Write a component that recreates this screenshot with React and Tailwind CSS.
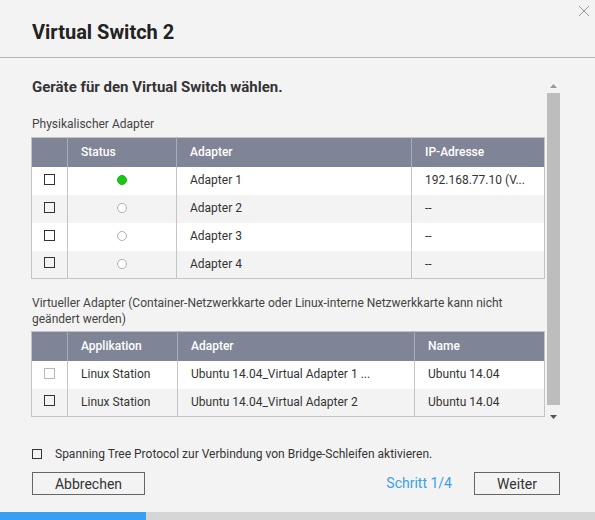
import React from 'react';

const physical = [
  { status: 'up', adapter: 'Adapter 1', ip: '192.168.77.10 (V...' },
  { status: 'down', adapter: 'Adapter 2', ip: '--' },
  { status: 'down', adapter: 'Adapter 3', ip: '--' },
  { status: 'down', adapter: 'Adapter 4', ip: '--' },
];

const virtual = [
  { app: 'Linux Station', adapter: 'Ubuntu 14.04_Virtual Adapter 1 ...', name: 'Ubuntu 14.04', disabled: true },
  { app: 'Linux Station', adapter: 'Ubuntu 14.04_Virtual Adapter 2', name: 'Ubuntu 14.04', disabled: false },
];

function Checkbox({ disabled }) {
  return (
    <span
      className={
        'inline-block w-[11px] h-[11px] border ' +
        (disabled ? 'border-[#b8b8b8]' : 'border-[#333]')
      }
    />
  );
}

function StatusDot({ status }) {
  if (status === 'up') {
    return <span className="inline-block w-[10px] h-[10px] rounded-full bg-[#11cc11] border border-[#22aa22]" />;
  }
  return <span className="inline-block w-[10px] h-[10px] rounded-full bg-white border border-[#b0b0b0]" />;
}

function HeadCell({ children, w }) {
  return (
    <th className={'h-[29px] px-[13px] text-left font-medium text-white border-l border-[#a8adb9] first:border-l-0 ' + w}>
      {children}
    </th>
  );
}

export default function App() {
  return (
    <div className="w-[595px] h-[520px] bg-[#f3f3f3] flex flex-col relative text-[#333] font-['Roboto','Liberation_Sans',sans-serif]">
      {/* close */}
      <button className="absolute top-[4px] right-[4px] w-[13px] h-[13px] text-[#9a9a9a]">
        <svg viewBox="0 0 12 12" width="12" height="12" fill="none" stroke="currentColor" strokeWidth="1">
          <path d="M1 1 L11 11 M11 1 L1 11" />
        </svg>
      </button>

      <div className="h-[58px] shrink-0 border-b border-[#b8b8b8] pl-[32px] pt-[18px]">
        <h1 className="text-[20px] leading-[28px] font-bold text-[#222]">Virtual Switch 2</h1>
      </div>

      <div className="h-[370px] shrink-0 flex">
        <div className="w-[544px] pl-[31px] pt-[19px]">
          <h2 className="pl-[1px] text-[15px] leading-[21px] font-bold text-[#333]">Geräte für den Virtual Switch wählen.</h2>
          <p className="mt-[18px] pl-[1px] text-[12px] leading-[16px] text-[#444]">Physikalischer Adapter</p>

          <table className="mt-[5px] w-[513px] border-collapse border border-[#c4c4c4] text-[12px] table-fixed">
            <thead className="bg-[#7f8596]">
              <tr>
                <HeadCell w="w-[36px]"></HeadCell>
                <HeadCell w="w-[109px]">Status</HeadCell>
                <HeadCell w="w-[235px]">Adapter</HeadCell>
                <HeadCell w="w-[133px]">IP-Adresse</HeadCell>
              </tr>
            </thead>
            <tbody>
              {physical.map((r, i) => (
                <tr key={r.adapter} className={i % 2 === 0 ? 'bg-white' : 'bg-[#f3f3f3]'}>
                  <td className="h-[28px] text-center">
                    <div className="flex justify-center -mt-[3px]"><Checkbox /></div>
                  </td>
                  <td className="text-center border-l border-[#c4c4c4]">
                    <div className="flex justify-center -mt-[1px]"><StatusDot status={r.status} /></div>
                  </td>
                  <td className="px-[13px] pb-[1px] border-l border-[#c4c4c4] text-[#333]">{r.adapter}</td>
                  <td className="px-[13px] pb-[1px] border-l border-[#c4c4c4] text-[#333] whitespace-nowrap">{r.ip}</td>
                </tr>
              ))}
            </tbody>
          </table>

          <p className="mt-[16px] pl-[1px] pr-[10px] text-[12px] leading-[16px] text-[#444]">
            Virtueller Adapter (Container-Netzwerkkarte oder Linux-interne Netzwerkkarte kann nicht geändert werden)
          </p>

          <table className="mt-[4px] w-[513px] border-collapse border border-[#c4c4c4] text-[12px] table-fixed">
            <thead className="bg-[#7f8596]">
              <tr>
                <HeadCell w="w-[36px]"></HeadCell>
                <HeadCell w="w-[110px]">Applikation</HeadCell>
                <HeadCell w="w-[237px]">Adapter</HeadCell>
                <HeadCell w="w-[130px]">Name</HeadCell>
              </tr>
            </thead>
            <tbody>
              {virtual.map((r, i) => (
                <tr key={r.adapter} className={i % 2 === 0 ? 'bg-white' : 'bg-[#f3f3f3]'}>
                  <td className="h-[28px] text-center">
                    <div className="flex justify-center -mt-[3px]"><Checkbox disabled={r.disabled} /></div>
                  </td>
                  <td className="px-[13px] pb-[1px] border-l border-[#c4c4c4]">{r.app}</td>
                  <td className="px-[13px] pb-[1px] border-l border-[#c4c4c4] whitespace-nowrap">{r.adapter}</td>
                  <td className="px-[13px] pb-[1px] border-l border-[#c4c4c4]">{r.name}</td>
                </tr>
              ))}
            </tbody>
          </table>
        </div>

        {/* scrollbar */}
        <div className="w-[18px] flex flex-col items-center pt-[26px]">
          <svg width="7" height="4" viewBox="0 0 7 4"><path d="M0 4 L3.5 0 L7 4 Z" fill="#999" /></svg>
          <div className="mt-[5px] w-[13px] h-[312px] bg-[#bdbdbd]" />
          <svg className="mt-[10px]" width="7" height="4" viewBox="0 0 7 4"><path d="M0 0 L3.5 4 L7 0 Z" fill="#555" /></svg>
        </div>
      </div>

      <div className="flex-1 flex flex-col px-[32px]">
        <label className="mt-[20px] flex items-center h-[12px]">
          <span className="inline-block w-[10px] h-[10px] border border-[#333]" />
          <span className="ml-[13px] text-[12px] text-[#333]">Spanning Tree Protocol zur Verbindung von Bridge-Schleifen aktivieren.</span>
        </label>
        <div className="mt-[12px] flex items-center">
          <button className="w-[113px] h-[23px] border border-[#666] text-[14px] text-[#333] leading-none">Abbrechen</button>
          <span className="ml-auto text-[14px] text-[#3a9ff0]">Schritt 1/4</span>
          <button className="ml-[22px] mr-[3px] w-[86px] h-[23px] border border-[#666] text-[14px] text-[#333] leading-none">Weiter</button>
        </div>
      </div>

      <div className="h-[8px] shrink-0 bg-[#d6d6d6] flex">
        <div className="w-[146px] bg-[#3a9ff0]" />
      </div>
    </div>
  );
}
